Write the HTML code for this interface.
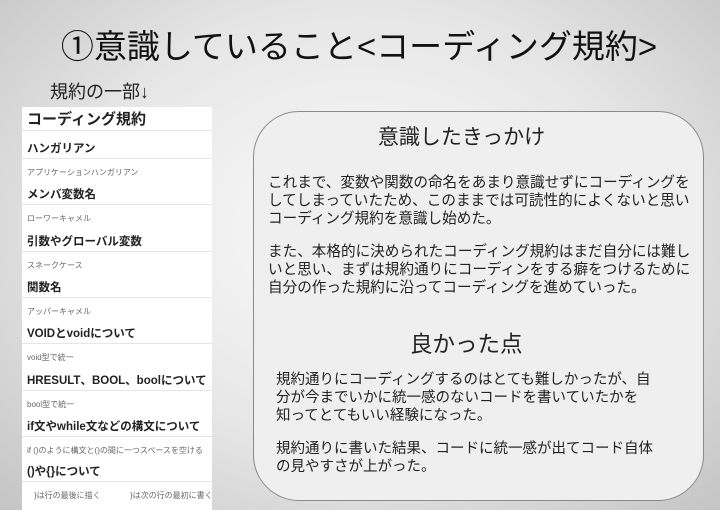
<!DOCTYPE html><html><head><meta charset="utf-8"><style>
body{margin:0;width:720px;height:510px;overflow:hidden;font-family:"Liberation Sans","Noto Sans CJK JP",sans-serif;background:radial-gradient(ellipse at 50% 45%,#fbfbfb 0%,#e6e6e6 55%,#c4c4c4 100%);position:relative}
.a{position:absolute;white-space:nowrap}
#t{left:0;width:718px;text-align:center;top:20px;font-size:33px;color:#111}
#p{left:22px;top:107px;width:190px;height:403px;background:#fff}
.h{position:absolute;left:5px;font-size:11.5px;font-weight:bold;color:#222}
.s{position:absolute;left:5px;font-size:8px;color:#666}
.l{position:absolute;left:0;width:190px;height:1px;background:#e6e6e6}
#b{left:253px;top:111px;width:449px;height:388px;border:1.5px solid #8a8a8a;border-radius:46px;background:#efefef}
.bt{position:absolute;font-size:14.6px;line-height:18px;color:#222;white-space:nowrap}
.g{height:15px}
</style></head><body>
<div class="a" id="t">①意識していること&lt;コーディング規約&gt;</div>
<div class="a" style="left:50px;top:78px;font-size:18px;color:#222">規約の一部↓</div>
<div class="a" id="p">
<div class="h" style="top:1px;font-size:15px">コーディング規約</div>
<div class="l" style="top:23px"></div>
<div class="h" style="top:33px">ハンガリアン</div><div class="l" style="top:51px"></div>
<div class="s" style="top:60px">アプリケーションハンガリアン</div>
<div class="h" style="top:79px">メンバ変数名</div><div class="l" style="top:97px"></div>
<div class="s" style="top:106px">ローワーキャメル</div>
<div class="h" style="top:126px">引数やグローバル変数</div><div class="l" style="top:144px"></div>
<div class="s" style="top:153px">スネークケース</div>
<div class="h" style="top:172px">関数名</div><div class="l" style="top:190px"></div>
<div class="s" style="top:199px">アッパーキャメル</div>
<div class="h" style="top:218px">VOIDとvoidについて</div><div class="l" style="top:236px"></div>
<div class="s" style="top:245px">void型で統一</div>
<div class="h" style="top:265px">HRESULT、BOOL、boolについて</div><div class="l" style="top:283px"></div>
<div class="s" style="top:292px">bool型で統一</div>
<div class="h" style="top:311px">if文やwhile文などの構文について</div><div class="l" style="top:329px"></div>
<div class="s" style="top:338px">if ()のように構文と()の間に一つスペースを空ける</div>
<div class="h" style="top:356px">()や{}について</div><div class="l" style="top:374px"></div>
<div class="s" style="top:383px;left:12px">}は行の最後に描く</div>
<div class="s" style="top:383px;left:108px">}は次の行の最初に書く</div>
</div>
<div class="a" id="b">
<div class="bt" style="left:0;width:415px;text-align:center;top:13px;font-size:21px;line-height:26px">意識したきっかけ</div>
<div class="bt" style="left:14px;top:62px">これまで、変数や関数の命名をあまり意識せずにコーディングを<br>してしまっていたため、このままでは可読性的によくないと思い<br>コーディング規約を意識し始めた。<div class="g"></div>また、本格的に決められたコーディング規約はまだ自分には難し<br>いと思い、まずは規約通りにコーディンをする癖をつけるために<br>自分の作った規約に沿ってコーディングを進めていった。</div>
<div class="bt" style="left:156px;top:219px;font-size:22.5px;line-height:28px">良かった点</div>
<div class="bt" style="left:22px;top:259px;font-size:14.5px">規約通りにコーディングするのはとても難しかったが、自<br>分が今までいかに統一感のないコードを書いていたかを<br>知ってとてもいい経験になった。<div class="g"></div>規約通りに書いた結果、コードに統一感が出てコード自体<br>の見やすさが上がった。</div>
</div>
</body></html>
